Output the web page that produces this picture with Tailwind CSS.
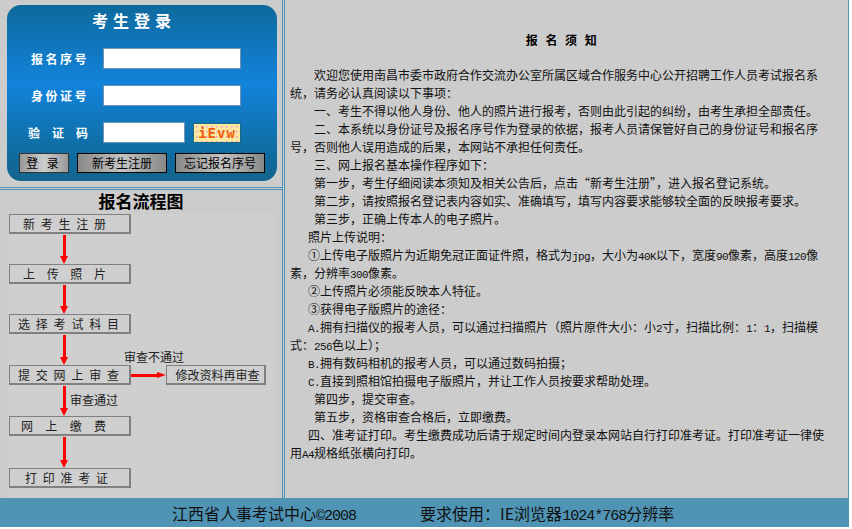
<!DOCTYPE html>
<html lang="zh-CN"><head><meta charset="utf-8"><script src="https://cdn.jsdelivr.net/npm/@tailwindcss/browser@4"></script></head>
<body class="bg-white">
<div class="w-[849px] h-[527px] flex flex-col bg-[#cccccc] text-black overflow-hidden font-['Noto_Sans_CJK_SC','Noto_Sans_CJK_JP',sans-serif]">
  <div class="h-[498px] flex">
    <div class="w-[285px] shrink-0 flex flex-col border-r-3 border-double border-[#4f94b5]">
      <div class="h-[190px] shrink-0 pl-[7px] pt-[5px] border-b-3 border-double border-[#4f94b5]">
        <form class="w-[270px] h-[176px] rounded-[14px] bg-[linear-gradient(#0e6a9c,#1283dc_45%,#0f6c9f_85%,#12648c)] flex flex-col">
          <div class="h-[34px] shrink-0 pr-[16px] text-center text-white font-bold text-[16px] leading-[31px] tracking-[5px]">考生登录</div>
          <div class="flex items-center h-[37px] mt-[1px]"><span class="w-[96px] pl-[24px] text-white text-[12px] font-semibold tracking-[2.5px]">报名序号</span><input class="w-[138px] h-[21px] bg-white border border-[#6f93b3]"></div>
          <div class="flex items-center h-[37px]"><span class="w-[96px] pl-[24px] text-white text-[12px] font-semibold tracking-[2.5px]">身份证号</span><input class="w-[138px] h-[21px] bg-white border border-[#6f93b3]"></div>
          <div class="flex items-center h-[37px]"><span class="w-[96px] pl-[21px] text-white text-[12px] font-semibold tracking-[12px] whitespace-nowrap">验证码</span><input class="w-[82px] h-[21px] bg-white border border-[#6f93b3]"><span class="ml-2 w-[48px] h-[20px] bg-[#fde8a0] bg-[radial-gradient(#eea8c8_1px,transparent_1px)] bg-[length:5px_5px] border border-[#1d6a80] text-[#f06010] font-bold text-[14px] leading-[18px] text-center tracking-[1px] font-['DejaVu_Sans_Mono',monospace]">iEvw</span></div>
          <div class="flex pl-[12px] mt-[2px]">
            <button type="button" class="w-[50px] h-[20px] border border-[#333] bg-[linear-gradient(90deg,#999,#ccc_50%,#999)] text-[12px] leading-none tracking-[3px]">登 录</button>
            <button type="button" class="ml-2 w-[90px] h-[20px] border border-black bg-[linear-gradient(90deg,#888,#c4c4c4_50%,#888)] text-[12px] leading-none">新考生注册</button>
            <button type="button" class="ml-2 w-[90px] h-[20px] border border-black bg-[linear-gradient(90deg,#888,#c4c4c4_50%,#888)] text-[12px] leading-none">忘记报名序号</button>
          </div>
        </form>
      </div>
      <div class="flex-1 flex flex-col">
        <h2 class="h-[24px] shrink-0 text-center font-bold text-[17px] leading-[22px]">报名流程图</h2>
        <div class="ml-[8px] w-[266px] h-[283px] pl-[1px] bg-[#cfcfcf] text-[#222] flex flex-col items-start">
          <div class="w-[122px] h-[20px] shrink-0 border border-[#808080] border-b-2 border-r-2 flex justify-between items-center text-[12px] pl-[13px] pr-[23px]"><span>新</span><span>考</span><span>生</span><span>注</span><span>册</span></div>
          <div class="ml-[55px] h-[30px] pt-[1px] w-0 flex flex-col items-center"><div class="w-[3px] flex-1 shrink-0 bg-[#ff0000]"></div><div class="border-x-[4px] border-x-transparent border-t-[8px] border-t-[#ff0000]"></div></div>
          <div class="w-[122px] h-[20px] shrink-0 border border-[#808080] border-b-2 border-r-2 flex justify-between items-center text-[12px] pl-[13px] pr-[23px]"><span>上</span><span>传</span><span>照</span><span>片</span></div>
          <div class="ml-[55px] h-[30px] pt-[1px] w-0 flex flex-col items-center"><div class="w-[3px] flex-1 bg-[#ff0000]"></div><div class="border-x-[4px] border-x-transparent border-t-[8px] border-t-[#ff0000]"></div></div>
          <div class="w-[122px] h-[20px] shrink-0 border border-[#808080] border-b-2 border-r-2 flex justify-between items-center text-[12px] pl-[8px] pr-[10px]"><span>选</span><span>择</span><span>考</span><span>试</span><span>科</span><span>目</span></div>
          <div class="ml-[55px] h-[31px] pt-[1px] w-0 flex flex-col items-center"><div class="w-[3px] flex-1 bg-[#ff0000]"></div><div class="border-x-[4px] border-x-transparent border-t-[8px] border-t-[#ff0000]"></div></div>
          <div class="flex items-center">
            <div class="w-[122px] h-[20px] shrink-0 border border-[#808080] border-b-2 border-r-2 flex justify-between items-center text-[12px] pl-[8px] pr-[10px]"><span>提</span><span>交</span><span>网</span><span>上</span><span>审</span><span>查</span></div>
            <div class="w-[35px] flex items-center relative"><div class="h-[3px] flex-1 bg-[#ff0000]"></div><div class="border-y-[3px] border-y-transparent border-l-[9px] border-l-[#ff0000]"></div><span class="absolute left-[-7px] bottom-[14px] text-[12px] whitespace-nowrap leading-[14px]">审查不通过</span></div>
            <div class="w-[100px] h-[20px] shrink-0 border border-[#808080] border-b-2 border-r-2 pl-[4px] text-center text-[12px] leading-[18px]">修改资料再审查</div>
          </div>
          <div class="ml-[55px] h-[31px] pt-[1px] w-0 flex flex-col items-center relative"><div class="w-[3px] flex-1 bg-[#ff0000]"></div><div class="border-x-[4px] border-x-transparent border-t-[8px] border-t-[#ff0000]"></div><span class="absolute left-[6px] top-[8px] text-[12px] whitespace-nowrap leading-[14px]">审查通过</span></div>
          <div class="w-[122px] h-[20px] shrink-0 border border-[#808080] border-b-2 border-r-2 flex justify-between items-center text-[12px] pl-[11px] pr-[23px]"><span>网</span><span>上</span><span>缴</span><span>费</span></div>
          <div class="ml-[55px] h-[32px] pt-[1px] w-0 flex flex-col items-center"><div class="w-[3px] flex-1 bg-[#ff0000]"></div><div class="border-x-[4px] border-x-transparent border-t-[8px] border-t-[#ff0000]"></div></div>
          <div class="w-[122px] h-[20px] shrink-0 border border-[#808080] border-b-2 border-r-2 flex justify-between items-center text-[12px] pl-[15px] pr-[21px]"><span>打</span><span>印</span><span>准</span><span>考</span><span>证</span></div>
        </div>
      </div>
    </div>
    <div class="flex-1 min-w-0 border-r border-[#4f94b5] pl-[5px] pr-[19px] text-[12px] leading-[18px] text-[#111]">
      <h3 class="h-[66px] pt-[31px] pl-[6px] text-center font-bold text-[12px] leading-[18px] tracking-[2.5px] text-black">报 名 须 知</h3>
      <p class="indent-[24px]">欢迎您使用南昌市委市政府合作交流办公室所属区域合作服务中心公开招聘工作人员考试报名系统，请务必认真阅读以下事项：</p>
      <p class="indent-[24px]">一、考生不得以他人身份、他人的照片进行报考，否则由此引起的纠纷，由考生承担全部责任。</p>
      <p class="indent-[24px]">二、本系统以身份证号及报名序号作为登录的依据，报考人员请保管好自己的身份证号和报名序号，否则他人误用造成的后果，本网站不承担任何责任。</p>
      <p class="indent-[24px]">三、网上报名基本操作程序如下：</p>
      <p class="indent-[24px]">第一步，考生仔细阅读本须知及相关公告后，点击“新考生注册”，进入报名登记系统。</p>
      <p class="indent-[24px]">第二步，请按照报名登记表内容如实、准确填写，填写内容要求能够较全面的反映报考要求。</p>
      <p class="indent-[24px]">第三步，正确上传本人的电子照片。</p>
      <p class="indent-[18px]">照片上传说明：</p>
      <p class="indent-[18px]">①上传电子版照片为近期免冠正面证件照，格式为<span class="font-['Liberation_Mono'] text-[11px] tracking-[-0.6px] leading-[0]">jpg</span>，大小为<span class="font-['Liberation_Mono'] text-[11px] tracking-[-0.6px] leading-[0]">40K</span>以下，宽度<span class="font-['Liberation_Mono'] text-[11px] tracking-[-0.6px] leading-[0]">90</span>像素，高度<span class="font-['Liberation_Mono'] text-[11px] tracking-[-0.6px] leading-[0]">120</span>像素，分辨率<span class="font-['Liberation_Mono'] text-[11px] tracking-[-0.6px] leading-[0]">300</span>像素。</p>
      <p class="indent-[18px]">②上传照片必须能反映本人特征。</p>
      <p class="indent-[18px]">③获得电子版照片的途径：</p>
      <p class="indent-[18px]"><span class="font-['Liberation_Mono'] text-[11px] tracking-[-0.6px] leading-[0]">A.</span>拥有扫描仪的报考人员，可以通过扫描照片（照片原件大小：小<span class="font-['Liberation_Mono'] text-[11px] tracking-[-0.6px] leading-[0]">2</span>寸，扫描比例：<span class="font-['Liberation_Mono'] text-[11px] tracking-[-0.6px] leading-[0]">1</span>：<span class="font-['Liberation_Mono'] text-[11px] tracking-[-0.6px] leading-[0]">1</span>，扫描模式：<span class="font-['Liberation_Mono'] text-[11px] tracking-[-0.6px] leading-[0]">256</span>色以上）；</p>
      <p class="indent-[18px]"><span class="font-['Liberation_Mono'] text-[11px] tracking-[-0.6px] leading-[0]">B.</span>拥有数码相机的报考人员，可以通过数码拍摄；</p>
      <p class="indent-[18px]"><span class="font-['Liberation_Mono'] text-[11px] tracking-[-0.6px] leading-[0]">C.</span>直接到照相馆拍摄电子版照片，并让工作人员按要求帮助处理。</p>
      <p class="indent-[24px]">第四步，提交审查。</p>
      <p class="indent-[24px]">第五步，资格审查合格后，立即缴费。</p>
      <p class="indent-[18px]">四、准考证打印。考生缴费成功后请于规定时间内登录本网站自行打印准考证。打印准考证一律使用<span class="font-['Liberation_Mono'] text-[11px] tracking-[-0.6px] leading-[0]">A4</span>规格纸张横向打印。</p>
    </div>
  </div>
  <div class="h-[29px] shrink-0 bg-[#4f94b5] flex items-center text-[16px] leading-none pl-[172px] text-[#111]">
    <span class="w-[248px] shrink-0">江西省人事考试中心<span class="font-['Liberation_Mono'] text-[15px] tracking-[-1px] leading-[0]">©2008</span></span><span>要求使用：IE浏览器<span class="font-['Liberation_Mono'] text-[15px] tracking-[-1px] leading-[0]">1024*768</span>分辨率</span>
  </div>
</div>
</body></html>
